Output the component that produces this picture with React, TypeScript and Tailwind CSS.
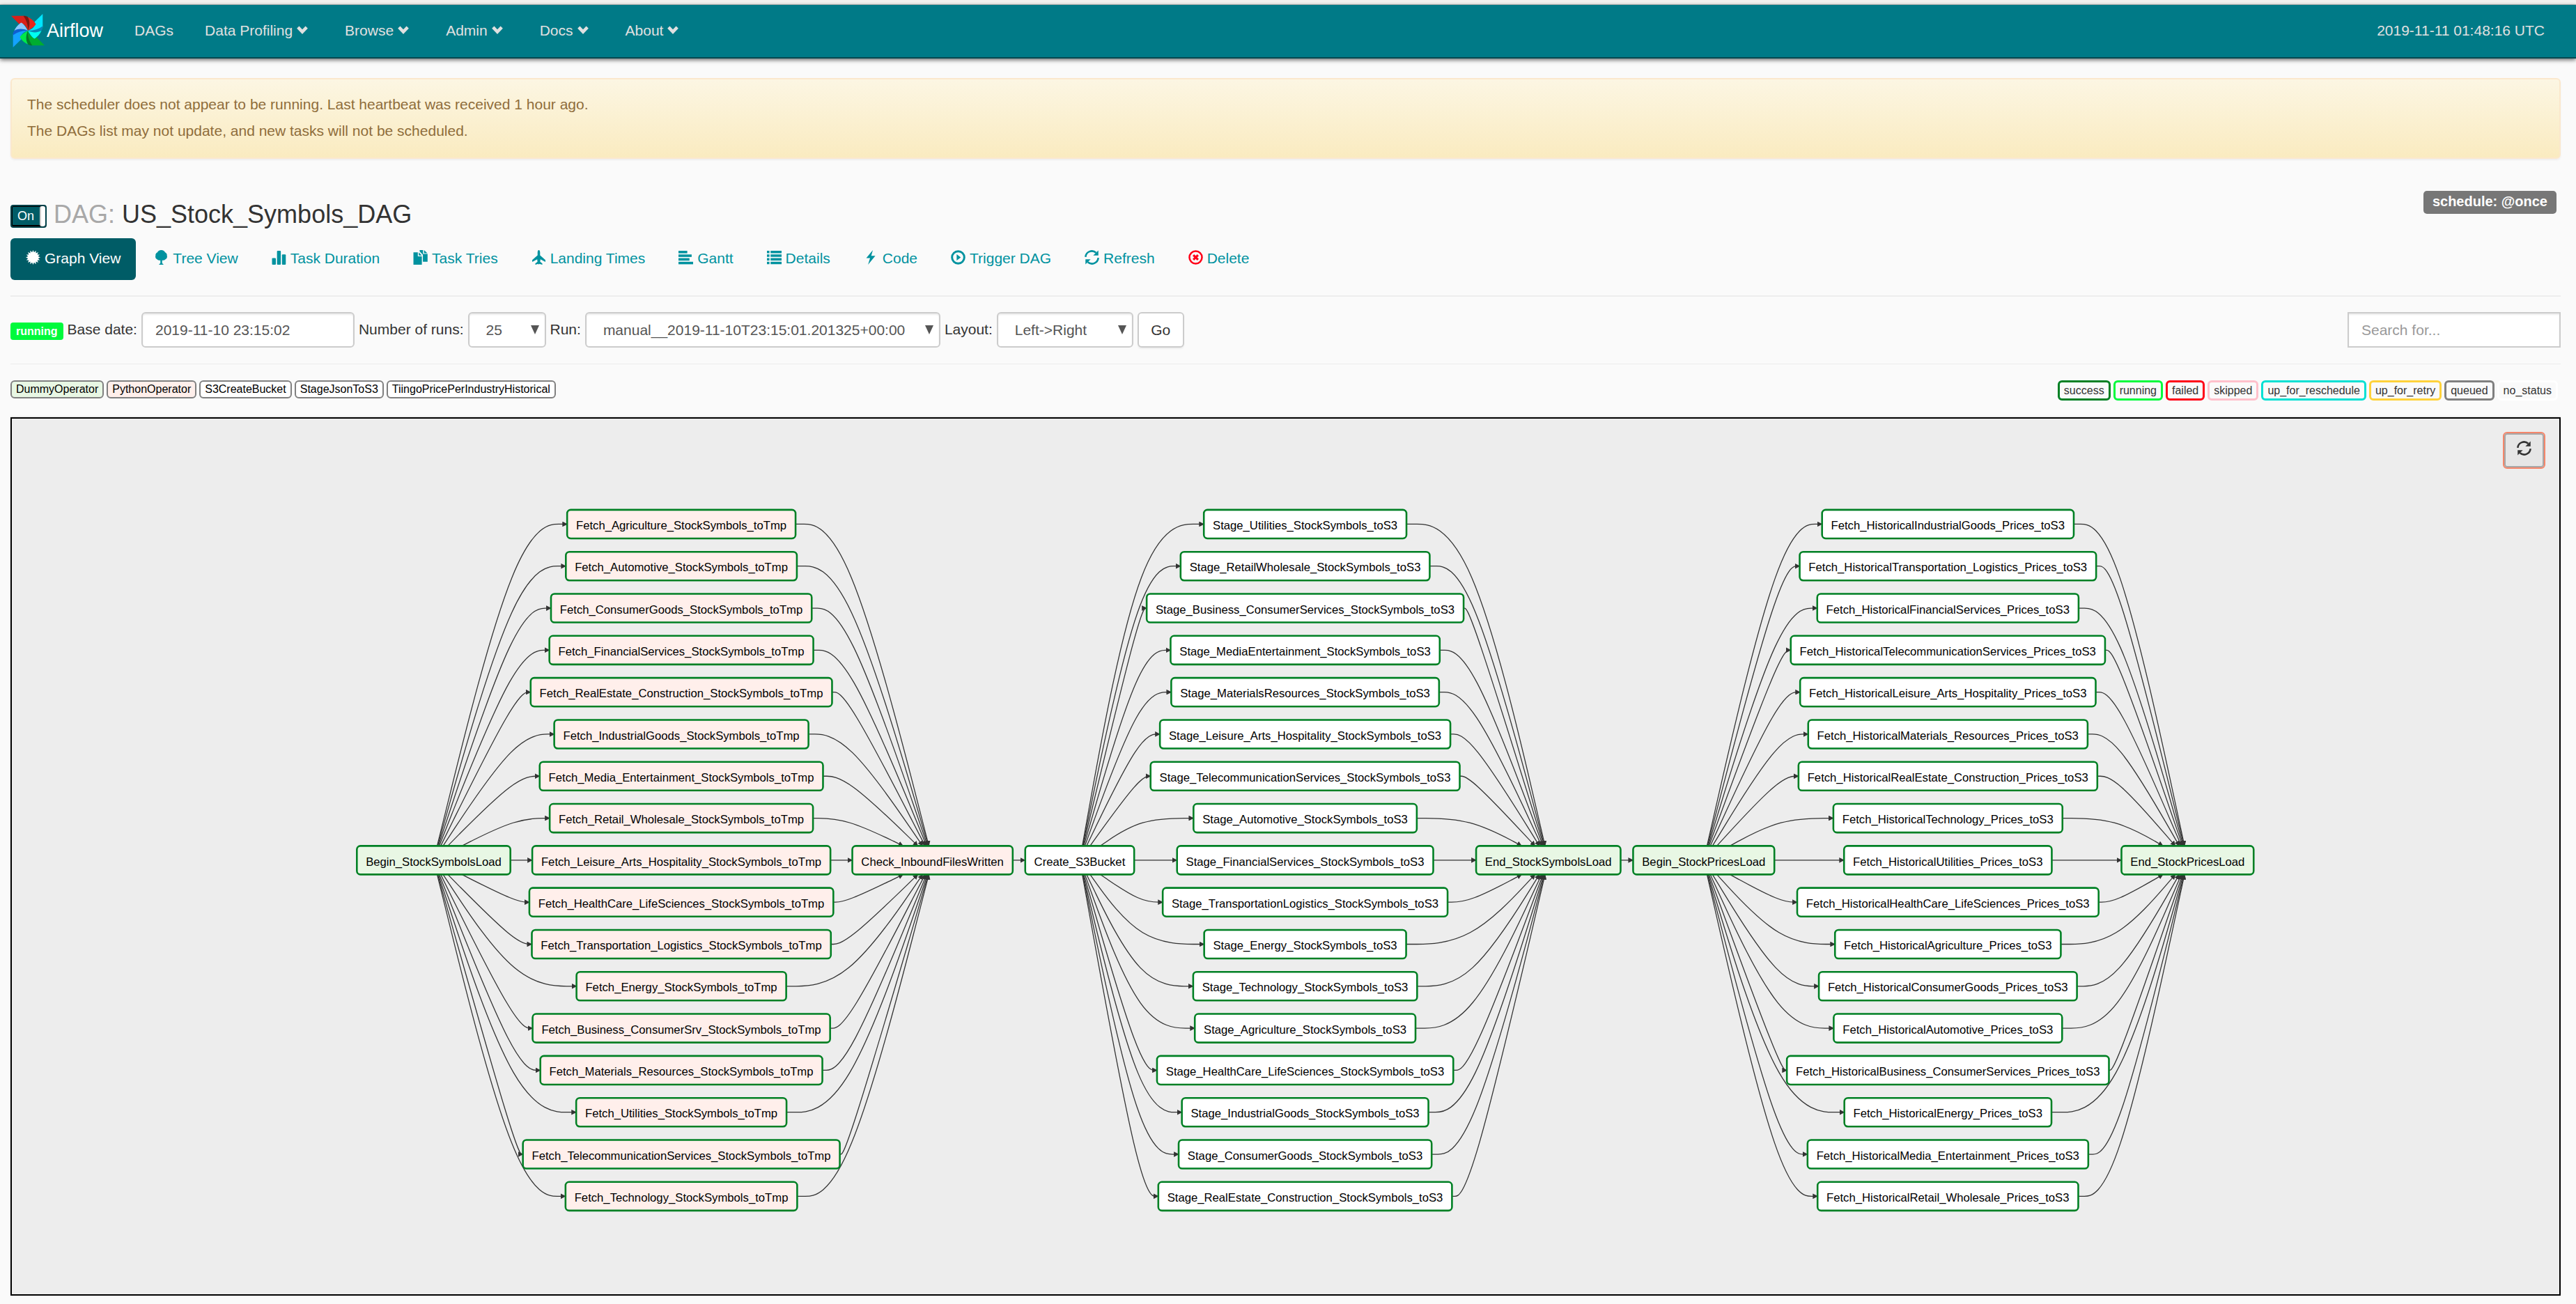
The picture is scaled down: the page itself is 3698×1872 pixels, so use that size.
import { useMemo, type ReactNode } from "react";

type Kind = "dummy" | "python" | "plain";

const GAP = 14;
const ROW = 47;
const NODE_H = 32;
const TOP = 118;
const LEFT = 386;

const fills: Record<Kind, string> = {
  dummy: "#e8f7e4",
  python: "#ffefeb",
  plain: "#ffffff",
};

const ranks: { kind: Kind; labels: string[] }[] = [
  { kind: "dummy", labels: ["Begin_StockSymbolsLoad"] },
  {
    kind: "python",
    labels: [
      "Fetch_Agriculture_StockSymbols_toTmp",
      "Fetch_Automotive_StockSymbols_toTmp",
      "Fetch_ConsumerGoods_StockSymbols_toTmp",
      "Fetch_FinancialServices_StockSymbols_toTmp",
      "Fetch_RealEstate_Construction_StockSymbols_toTmp",
      "Fetch_IndustrialGoods_StockSymbols_toTmp",
      "Fetch_Media_Entertainment_StockSymbols_toTmp",
      "Fetch_Retail_Wholesale_StockSymbols_toTmp",
      "Fetch_Leisure_Arts_Hospitality_StockSymbols_toTmp",
      "Fetch_HealthCare_LifeSciences_StockSymbols_toTmp",
      "Fetch_Transportation_Logistics_StockSymbols_toTmp",
      "Fetch_Energy_StockSymbols_toTmp",
      "Fetch_Business_ConsumerSrv_StockSymbols_toTmp",
      "Fetch_Materials_Resources_StockSymbols_toTmp",
      "Fetch_Utilities_StockSymbols_toTmp",
      "Fetch_TelecommunicationServices_StockSymbols_toTmp",
      "Fetch_Technology_StockSymbols_toTmp",
    ],
  },
  { kind: "python", labels: ["Check_InboundFilesWritten"] },
  { kind: "plain", labels: ["Create_S3Bucket"] },
  {
    kind: "plain",
    labels: [
      "Stage_Utilities_StockSymbols_toS3",
      "Stage_RetailWholesale_StockSymbols_toS3",
      "Stage_Business_ConsumerServices_StockSymbols_toS3",
      "Stage_MediaEntertainment_StockSymbols_toS3",
      "Stage_MaterialsResources_StockSymbols_toS3",
      "Stage_Leisure_Arts_Hospitality_StockSymbols_toS3",
      "Stage_TelecommunicationServices_StockSymbols_toS3",
      "Stage_Automotive_StockSymbols_toS3",
      "Stage_FinancialServices_StockSymbols_toS3",
      "Stage_TransportationLogistics_StockSymbols_toS3",
      "Stage_Energy_StockSymbols_toS3",
      "Stage_Technology_StockSymbols_toS3",
      "Stage_Agriculture_StockSymbols_toS3",
      "Stage_HealthCare_LifeSciences_StockSymbols_toS3",
      "Stage_IndustrialGoods_StockSymbols_toS3",
      "Stage_ConsumerGoods_StockSymbols_toS3",
      "Stage_RealEstate_Construction_StockSymbols_toS3",
    ],
  },
  { kind: "dummy", labels: ["End_StockSymbolsLoad"] },
  { kind: "dummy", labels: ["Begin_StockPricesLoad"] },
  {
    kind: "plain",
    labels: [
      "Fetch_HistoricalIndustrialGoods_Prices_toS3",
      "Fetch_HistoricalTransportation_Logistics_Prices_toS3",
      "Fetch_HistoricalFinancialServices_Prices_toS3",
      "Fetch_HistoricalTelecommunicationServices_Prices_toS3",
      "Fetch_HistoricalLeisure_Arts_Hospitality_Prices_toS3",
      "Fetch_HistoricalMaterials_Resources_Prices_toS3",
      "Fetch_HistoricalRealEstate_Construction_Prices_toS3",
      "Fetch_HistoricalTechnology_Prices_toS3",
      "Fetch_HistoricalUtilities_Prices_toS3",
      "Fetch_HistoricalHealthCare_LifeSciences_Prices_toS3",
      "Fetch_HistoricalAgriculture_Prices_toS3",
      "Fetch_HistoricalConsumerGoods_Prices_toS3",
      "Fetch_HistoricalAutomotive_Prices_toS3",
      "Fetch_HistoricalBusiness_ConsumerServices_Prices_toS3",
      "Fetch_HistoricalEnergy_Prices_toS3",
      "Fetch_HistoricalMedia_Entertainment_Prices_toS3",
      "Fetch_HistoricalRetail_Wholesale_Prices_toS3",
    ],
  },
  { kind: "dummy", labels: ["End_StockPricesLoad"] },
];

interface Pt {
  x: number;
  y: number;
}
interface GraphNode extends Pt {
  label: string;
  kind: Kind;
  w: number;
}

/* Point where the segment from a node's centre towards p leaves its box. */
function border(n: GraphNode, p: Pt): Pt {
  const dx = p.x - n.x;
  const dy = p.y - n.y;
  const hw = n.w / 2;
  const hh = NODE_H / 2;
  if (Math.abs(dy) * hw > Math.abs(dx) * hh) {
    const h = dy < 0 ? -hh : hh;
    return { x: n.x + (h * dx) / dy, y: n.y + h };
  }
  const w = dx < 0 ? -hw : hw;
  return { x: n.x + w, y: n.y + (w * dy) / dx };
}

/* Uniform B-spline through start, one control point and end. */
function basis(a: Pt, b: Pt, c: Pt): string {
  const mix = (p: Pt, q: Pt, u: number, v: number) =>
    `${((p.x * u + q.x * v) / (u + v)).toFixed(1)} ${((p.y * u + q.y * v) / (u + v)).toFixed(1)}`;
  const m = `${((a.x + 4 * b.x + c.x) / 6).toFixed(1)} ${((a.y + 4 * b.y + c.y) / 6).toFixed(1)}`;
  return [
    `M ${mix(a, b, 1, 0)} L ${mix(a, b, 5, 1)}`,
    `C ${mix(a, b, 2, 1)} ${mix(a, b, 1, 2)} ${m}`,
    `C ${mix(b, c, 2, 1)} ${mix(b, c, 1, 2)} ${mix(b, c, 1, 5)}`,
    `L ${mix(b, c, 0, 1)}`,
  ].join(" ");
}

function layout() {
  const ctx = document.createElement("canvas").getContext("2d")!;
  ctx.font = '130px "Liberation Sans", Arial, sans-serif';
  const mid = TOP + 8 * ROW;
  let x = LEFT;
  const cols = ranks.map((r) => {
    const widths = r.labels.map((l) => ctx.measureText(l).width / 10 + 20);
    const colW = Math.max(...widths);
    const cx = x + colW / 2;
    const nodes: GraphNode[] = r.labels.map((label, i) => ({
      label,
      kind: r.kind,
      w: widths[i],
      x: cx,
      y: r.labels.length === 1 ? mid : TOP + i * ROW,
    }));
    const col = { left: x, right: x + colW, nodes };
    x += colW + GAP;
    return col;
  });
  const edges: string[] = [];
  for (let i = 0; i + 1 < cols.length; i++) {
    const bend = cols[i].right + GAP / 2;
    for (const s of cols[i].nodes)
      for (const t of cols[i + 1].nodes) {
        const y = cols[i].nodes.length > 1 ? s.y : t.y;
        const via = { x: bend, y };
        edges.push(basis(border(s, via), via, border(t, via)));
      }
  }
  return { nodes: cols.flatMap((c) => c.nodes), edges };
}

function Graph() {
  const { nodes, edges } = useMemo(layout, []);
  return (
    <svg viewBox="0 0 2850 980" className="block w-full" role="img" aria-label="Task graph">
      <defs>
        <marker id="arrow" viewBox="0 0 10 10" refX="9" refY="5" markerUnits="userSpaceOnUse" markerWidth="6" markerHeight="6" orient="auto">
          <path d="M0 0 L10 5 L0 10 z" fill="#333" />
        </marker>
      </defs>
      <g fill="none" stroke="#333" strokeWidth="1">
        {edges.map((d) => (
          <path key={d} d={d} markerEnd="url(#arrow)" />
        ))}
      </g>
      {nodes.map((n) => (
        <g key={n.label}>
          <rect x={n.x - n.w / 2} y={n.y - NODE_H / 2} width={n.w} height={NODE_H} rx="4" fill={fills[n.kind]} stroke="#008024" strokeWidth="2" />
          <text x={n.x - n.w / 2 + 10} y={n.y + 6} className="fill-black text-[13px]">
            {n.label}
          </text>
        </g>
      ))}
    </svg>
  );
}

function Glyph({ children, className = "" }: { children: ReactNode; className?: string }) {
  return (
    <svg viewBox="0 0 20 20" aria-hidden="true" className={`size-[21px] shrink-0 fill-current ${className}`}>
      {children}
    </svg>
  );
}

const refreshShape = (
  <>
    <path d="M1.3 9.4 A8.6 8.6 0 0 1 15.6 3.6" fill="none" stroke="currentColor" strokeWidth="2.4" />
    <path d="M18.8 0.4 V7.4 H11.8 Z" />
    <path d="M18.7 10.6 A8.6 8.6 0 0 1 4.4 16.4" fill="none" stroke="currentColor" strokeWidth="2.4" />
    <path d="M1.2 19.6 V12.6 H8.2 Z" />
  </>
);

const starPoints = Array.from({ length: 32 }, (_, i) => {
  const r = i % 2 ? 7 : 10;
  const a = (i * Math.PI) / 16;
  return `${(10 + r * Math.sin(a)).toFixed(2)},${(10 - r * Math.cos(a)).toFixed(2)}`;
}).join(" ");

const tabs: { label: string; icon: ReactNode; active?: boolean; red?: boolean }[] = [
  { label: "Graph View", active: true, icon: <polygon points={starPoints} /> },
  {
    label: "Tree View",
    icon: <path d="M10 0 C12.6 0 14.6 1.2 15.2 3.2 C17 4 18.2 5.8 17.8 7.6 C18.6 9.6 17.6 12 15.4 12.8 C14 14 12.6 14.2 11.2 14 V18 C12 18.6 13 18.8 13 20 H7 C7 18.8 8 18.6 8.8 18 V14 C7.4 14.2 6 14 4.6 12.8 C2.4 12 1.4 9.6 2.2 7.6 C1.8 5.8 3 4 4.8 3.2 C5.4 1.2 7.4 0 10 0 Z" />,
  },
  {
    label: "Task Duration",
    icon: (
      <>
        <rect x="0.5" y="11" width="5.2" height="9" rx="1" />
        <rect x="7.3" y="1" width="5.2" height="19" rx="1" />
        <rect x="14.1" y="6" width="5.2" height="14" rx="1" />
      </>
    ),
  },
  {
    label: "Task Tries",
    icon: (
      <>
        <path d="M0.5 3 H6.5 V8.5 H12 V20 H0.5 Z M7.8 3 L12 7.3 H7.8 Z" />
        <path d="M9 0 H13.6 V5.2 H19.8 V16 H13.4 V6.4 L9 1.8 Z M15 0 L19.6 4.2 H15 Z" />
      </>
    ),
  },
  {
    label: "Landing Times",
    icon: <path d="M10 0 C11 0 11.7 1.6 11.7 3.4 V7.2 L19 13.6 V16.2 L12.2 12.6 L11.8 16 L14.8 18.4 V20 L10.6 18.8 L10 20 L9.4 18.8 L5.2 20 V18.4 L8.2 16 L7.8 12.6 L1 16.2 V13.6 L8.3 7.2 V3.4 C8.3 1.6 9 0 10 0 Z" />,
  },
  {
    label: "Gantt",
    icon: (
      <>
        <rect x="0" y="1" width="12" height="3.4" />
        <rect x="0" y="6" width="18" height="3.4" />
        <rect x="0" y="11" width="15" height="3.4" />
        <rect x="0" y="16" width="20" height="3.4" />
      </>
    ),
  },
  {
    label: "Details",
    icon: (
      <>
        {[1, 6, 11, 16].map((y) => (
          <path key={y} d={`M0 ${y} h3.4 v3.4 h-3.4 Z M5 ${y} h15 v3.4 h-15 Z`} />
        ))}
      </>
    ),
  },
  { label: "Code", icon: <path d="M12.4 0 L3.4 11 H8.6 L5.8 20 L15.8 7.8 H10.2 Z" /> },
  {
    label: "Trigger DAG",
    icon: (
      <>
        <circle cx="10" cy="10" r="8.4" fill="none" stroke="currentColor" strokeWidth="2.8" />
        <path d="M8 5.8 L13.6 10 L8 14.2 Z" />
      </>
    ),
  },
  { label: "Refresh", icon: refreshShape },
  {
    label: "Delete",
    red: true,
    icon: (
      <>
        <circle cx="10" cy="10" r="8.6" fill="none" stroke="currentColor" strokeWidth="2.4" />
        <path d="M6.8 6.8 L13.2 13.2 M13.2 6.8 L6.8 13.2" stroke="currentColor" strokeWidth="3" />
      </>
    ),
  },
];

const blades = [
  { body: "#d9201a", dark: "#7d1710", lobe: "#e8251c" },
  { body: "#00e5ff", dark: "#0a86b5", lobe: "#00fff2" },
  { body: "#00ad30", dark: "#067a28", lobe: "#00e84a" },
  { body: "#14a2ff", dark: "#0f5fd0", lobe: "#8cc8ff" },
];

function Logo() {
  return (
    <svg viewBox="-25 -25 50 50" aria-hidden="true" className="size-[50px] shrink-0">
      {blades.map((b, i) => (
        <g key={b.body} transform={`rotate(${i * 90})`}>
          <path d="M-24 -21.3 H-4.7 C-1 -15 1 -8 0 0 C-2 -6 -5 -10 -10 -10 L-12.5 -9.5 Z" fill={b.body} />
          <path d="M-6.5 -21.3 H-4.7 C-3 -21.2 -1.4 -20.5 0 -19.5 C4 -13 3 -7 0 0 C0.5 -8 -2 -15 -6.5 -21.3 Z" fill={b.dark} />
        </g>
      ))}
      {blades.map((b, i) => (
        <path
          key={b.lobe}
          transform={`rotate(${i * 90})`}
          d="M0 -19.5 C5 -17.5 9.5 -13 11.5 -9.5 C10 -6 5 -3 0 0 C3 -7 3.4 -13 0 -19.5 Z"
          fill={b.lobe}
        />
      ))}
    </svg>
  );
}

const menu = ["Data Profiling", "Browse", "Admin", "Docs", "About"];

const operators: { label: string; cls: string }[] = [
  { label: "DummyOperator", cls: "bg-[#e8f7e4]" },
  { label: "PythonOperator", cls: "bg-[#ffefeb]" },
  { label: "S3CreateBucket", cls: "bg-white" },
  { label: "StageJsonToS3", cls: "bg-white" },
  { label: "TiingoPricePerIndustryHistorical", cls: "bg-white" },
];

const states: { label: string; cls: string }[] = [
  { label: "success", cls: "border-[#008024]" },
  { label: "running", cls: "border-[#00fa3c]" },
  { label: "failed", cls: "border-[#ff0018]" },
  { label: "skipped", cls: "border-[#ffc0cb]" },
  { label: "up_for_reschedule", cls: "border-[#00e0d3]" },
  { label: "up_for_retry", cls: "border-[#ffd23a]" },
  { label: "queued", cls: "border-[#808080]" },
  { label: "no_status", cls: "border-white" },
];

const field = "h-[51px] border-2 border-[#ccc] bg-white text-[21px] text-[#555] shadow-[inset_0_2px_2px_rgba(0,0,0,0.075)] outline-none";

function Picker({ id, value, width }: { id: string; value: string; width: string }) {
  return (
    <span className={`relative ${width}`}>
      <select id={id} className={`${field} w-full appearance-none rounded-md pl-6`}>
        <option>{value}</option>
      </select>
      <svg viewBox="0 0 12 13" aria-hidden="true" className="pointer-events-none absolute top-[19px] right-[10px] h-[13px] w-3 fill-[#555]">
        <path d="M0 0 H12 L6 13 Z" />
      </svg>
    </span>
  );
}

export default function App() {
  return (
    <div className="min-h-screen bg-[#fafafa] font-['Liberation_Sans',Arial,sans-serif] text-[21px] leading-[30px] text-[#333]">
      <div className="h-[7px] border-b border-[#c9c9c6] bg-[#f1f1ef]" />
      <nav className="flex h-[77px] items-center border-b-2 border-[#004a52] bg-[#007a87] pr-[45px] pb-0.5 pl-[15px] text-[#e0e0e0] shadow-[0_2px_6px_rgba(0,0,0,0.6)]">
        <a href="#home" className="flex items-center gap-0.5 text-[27px] text-white">
          <Logo />
          <span>Airflow</span>
        </a>
        <a href="#dags" className="ml-[45px]">DAGs</a>
        {menu.map((m) => (
          <button key={m} type="button" className="ml-[45px] flex items-center gap-1.5">
            {m}
            <svg viewBox="0 0 24 12" aria-hidden="true" className="mb-0.5 h-3 w-6">
              <path d="M1.8 2.2 L8 8.6 L14.2 2.2" fill="none" stroke="currentColor" strokeWidth="4.6" />
            </svg>
          </button>
        ))}
        <span className="ml-auto">2019-11-11 01:48:16 UTC</span>
      </nav>

      <main className="pt-7 pr-[22px] pb-3 pl-[15px]">
        <div role="alert" className="rounded-md border-2 border-[#fbe8cd] bg-linear-to-b from-[#fcf6e3] to-[#faebc0] px-[22px] pt-[21px] pb-[23px] text-[#8f6d3b] shadow-[0_2px_3px_rgba(0,0,0,0.05)]">
          <p>The scheduler does not appear to be running. Last heartbeat was received 1 hour ago.</p>
          <p className="mt-2">The DAGs list may not update, and new tasks will not be scheduled.</p>
        </div>

        <div className="mt-[46px] flex items-start justify-between">
          <h1 className="mt-3.5 flex items-center gap-2.5 text-[36px] leading-10">
            <button type="button" aria-pressed="true" className="mt-1 flex h-[33px] w-[52px] items-stretch rounded-[4px] border-2 border-[#004048] bg-[#005c66] text-[18px] leading-[29px] text-white shadow-[inset_0_1px_0_#000,inset_0_-2px_0_#000,inset_1px_0_0_#000]">
              <span className="flex-1 text-center">On</span>
              <span className="w-[8px] rounded-[3px] border-l-2 border-[#ccc] bg-white" />
            </button>
            <span>
              <span className="text-[#a8a8a8]">DAG:</span> US_Stock_Symbols_DAG
            </span>
          </h1>
          <span className="mr-1.5 rounded-[5px] bg-[#777] px-[13px] pb-0.5 text-[20px] leading-[31px] font-bold text-white">schedule: @once</span>
        </div>

        <nav className="mt-3.5 flex gap-1">
          {tabs.map((t) => (
            <a
              key={t.label}
              href={`#${t.label.toLowerCase().replace(" ", "-")}`}
              className={
                t.active
                  ? "flex h-[60px] items-center gap-1.5 rounded-md bg-[#005c66] px-[22px] pb-0.5 text-white"
                  : "flex h-[60px] items-center gap-1.5 rounded-md px-[22px] pb-0.5 text-[#00929f]"
              }
            >
              <Glyph className={t.red ? "mb-1 text-[#ff0018]" : "mb-1"}>{t.icon}</Glyph>
              {t.label}
            </a>
          ))}
        </nav>
        <hr className="mt-[22px] border-t-2 border-[#ededed]" />

        <form className="mt-[22px] flex items-center gap-1.5" onSubmit={(e) => e.preventDefault()}>
          <span className="mt-1 rounded-[4px] bg-[#00fa3c] px-2 text-[16px] leading-[25px] font-bold text-white">running</span>
          <label htmlFor="base-date" className="mb-0.5">Base date:</label>
          <input id="base-date" type="text" defaultValue="2019-11-10 23:15:02" className={`${field} w-[306px] rounded-md px-[18px]`} />
          <label htmlFor="runs" className="mb-0.5">Number of runs:</label>
          <Picker id="runs" value="25" width="w-[112px]" />
          <label htmlFor="run" className="mb-0.5">Run:</label>
          <Picker id="run" value="manual__2019-11-10T23:15:01.201325+00:00" width="w-[510px]" />
          <label htmlFor="layout" className="mb-0.5">Layout:</label>
          <Picker id="layout" value="Left->Right" width="w-[196px]" />
          <button type="submit" className="h-[51px] w-[67px] rounded-md border-2 border-[#ccc] bg-white text-[#333] shadow-[0_2px_2px_rgba(0,0,0,0.05)]">Go</button>
          <input type="search" aria-label="Search for" placeholder="Search for..." className={`${field} ml-auto w-[306px] px-[18px] placeholder:text-[#999]`} />
        </form>
        <hr className="mt-[23px] border-t border-[#ededed]" />

        <div className="mt-[23px] flex items-start justify-between text-[16px]">
          <ul className="flex gap-1 text-black">
            {operators.map((o) => (
              <li key={o.label} className={`rounded-md border-2 border-[#808080] px-1.5 leading-[22px] ${o.cls}`}>
                {o.label}
              </li>
            ))}
          </ul>
          <ul className="mr-1 flex gap-1">
            {states.map((s) => (
              <li key={s.label} className={`rounded-md border-3 px-1.5 leading-[23px] ${s.cls}`}>
                {s.label}
              </li>
            ))}
          </ul>
        </div>
        <hr className="mt-[22px] border-t-2 border-[#ededed]" />

        <section className="relative border-2 border-black bg-[#ededed]">
          <Graph />
          <button type="button" aria-label="Refresh graph" className="absolute top-[21px] right-[22px] flex h-[49px] w-[57px] items-center justify-center rounded-[4px] border-2 border-[#a8a8a8] bg-[#e6e6e6] text-[#333] outline-2 outline-[#f5866a]">
            <Glyph className="mb-1.5">{refreshShape}</Glyph>
          </button>
        </section>
      </main>
    </div>
  );
}
